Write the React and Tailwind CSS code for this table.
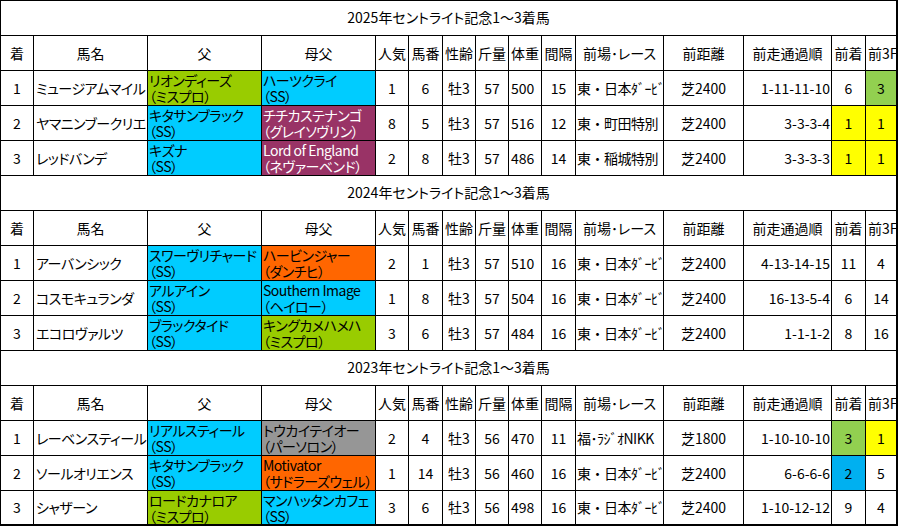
import React from 'react';

const COLORS = {
  g: 'bg-[#99cc00]',
  c: 'bg-[#00ccff]',
  m: 'bg-[#993366] text-white',
  o: 'bg-[#ff6600]',
  s: 'bg-[#969696]',
  y: 'bg-[#ffff00]',
  l: 'bg-[#92d050]',
  b: 'bg-[#00b0f0]',
};

const HEADERS = ['着', '馬名', '父', '母父', '人気', '馬番', '性齢', '斤量', '体重', '間隔', '前場･レース', '前距離', '前走通過順', '前着'];

const SECTIONS = [
  {
    year: 2025,
    rows: [
      ['1', 'ミュージアムマイル', ['リオンディーズ', '（ミスプロ）', 'g'], ['ハーツクライ', '（SS）', 'c'], '1', '6', '牡3', '57', '500', '15', '東・日本ﾀﾞｰﾋﾞ', '芝2400', '1-11-11-10', ['6', ''], ['3', 'l']],
      ['2', 'ヤマニンブークリエ', ['キタサンブラック', '（SS）', 'c'], ['チチカステナンゴ', '（グレイソヴリン）', 'm'], '8', '5', '牡3', '57', '516', '12', '東・町田特別', '芝2400', '3-3-3-4', ['1', 'y'], ['1', 'y']],
      ['3', 'レッドバンデ', ['キズナ', '（SS）', 'c'], ['Lord of England', '（ネヴァーベンド）', 'm'], '2', '8', '牡3', '57', '486', '14', '東・稲城特別', '芝2400', '3-3-3-3', ['1', 'y'], ['1', 'y']],
    ],
  },
  {
    year: 2024,
    rows: [
      ['1', 'アーバンシック', ['スワーヴリチャード', '（SS）', 'c'], ['ハービンジャー', '（ダンチヒ）', 'o'], '2', '1', '牡3', '57', '510', '16', '東・日本ﾀﾞｰﾋﾞ', '芝2400', '4-13-14-15', ['11', ''], ['4', '']],
      ['2', 'コスモキュランダ', ['アルアイン', '（SS）', 'c'], ['Southern Image', '（ヘイロー）', 'c'], '1', '8', '牡3', '57', '504', '16', '東・日本ﾀﾞｰﾋﾞ', '芝2400', '16-13-5-4', ['6', ''], ['14', '']],
      ['3', 'エコロヴァルツ', ['ブラックタイド', '（SS）', 'c'], ['キングカメハメハ', '（ミスプロ）', 'g'], '3', '6', '牡3', '57', '484', '16', '東・日本ﾀﾞｰﾋﾞ', '芝2400', '1-1-1-2', ['8', ''], ['16', '']],
    ],
  },
  {
    year: 2023,
    rows: [
      ['1', 'レーベンスティール', ['リアルスティール', '（SS）', 'c'], ['トウカイテイオー', '（パーソロン）', 's'], '2', '4', '牡3', '56', '470', '11', '福･ﾗｼﾞｵNIKK', '芝1800', '1-10-10-10', ['3', 'l'], ['1', 'y']],
      ['2', 'ソールオリエンス', ['キタサンブラック', '（SS）', 'c'], ['Motivator', '（サドラーズウェル）', 'o'], '1', '14', '牡3', '56', '460', '16', '東・日本ﾀﾞｰﾋﾞ', '芝2400', '6-6-6-6', ['2', 'b'], ['5', '']],
      ['3', 'シャザーン', ['ロードカナロア', '（ミスプロ）', 'g'], ['マンハッタンカフェ', '（SS）', 'c'], '3', '6', '牡3', '56', '498', '16', '東・日本ﾀﾞｰﾋﾞ', '芝2400', '1-10-12-12', ['9', ''], ['4', '']],
    ],
  },
];

const cell = 'bg-white flex items-center overflow-hidden whitespace-nowrap';

function Pedigree({ data }) {
  const [top, bottom, color] = data;
  return (
    <div className={`${COLORS[color]} flex flex-col justify-center overflow-hidden whitespace-nowrap pl-px leading-[16px] tracking-[-0.5px]`}>
      <span>{top}</span>
      <span>{bottom}</span>
    </div>
  );
}

function Mark({ data }) {
  const [value, color] = data;
  const bg = color ? COLORS[color] : 'bg-white';
  return <div className={`${bg} flex items-center justify-center overflow-hidden`}>{value}</div>;
}

function Section({ year, rows }) {
  return (
    <>
      <div className={`${cell} col-span-full justify-center pb-px`}>{year}年セントライト記念1～3着馬</div>
      {HEADERS.map((h) => (
        <div key={h} className={`${cell} justify-center`}>{h}</div>
      ))}
      <div className={`${cell} justify-start pl-[2px]`}>前3F</div>
      {rows.map((r) => (
        <React.Fragment key={r[1]}>
          <div className={`${cell} justify-center`}>{r[0]}</div>
          <div className={`${cell} pl-[2px] tracking-[-0.5px]`}>{r[1]}</div>
          <Pedigree data={r[2]} />
          <Pedigree data={r[3]} />
          <div className={`${cell} justify-center`}>{r[4]}</div>
          <div className={`${cell} justify-center`}>{r[5]}</div>
          <div className={`${cell} justify-center`}>{r[6]}</div>
          <div className={`${cell} justify-center`}>{r[7]}</div>
          <div className={`${cell} pl-[2px]`}>{r[8]}</div>
          <div className={`${cell} justify-center`}>{r[9]}</div>
          <div className={`${cell} pl-px tracking-[-0.5px] [font-feature-settings:normal]`}>{r[10]}</div>
          <div className={`${cell} justify-center`}>{r[11]}</div>
          <div className={`${cell} justify-end pr-px`}>{r[12]}</div>
          <Mark data={r[13]} />
          <Mark data={r[14]} />
        </React.Fragment>
      ))}
    </>
  );
}

export default function App() {
  return (
    <div className="w-[898px] h-[526px] bg-white">
      <div
        className="grid w-[898px] bg-black gap-px pt-px pl-px pr-[2px] pb-[2px] text-[14px] text-black font-['Noto_Sans_CJK_JP',sans-serif] [font-feature-settings:'palt'] grid-cols-[32px_113px_113px_113px_32px_33px_32px_32px_32px_33px_87px_79px_87px_33px_30px] grid-rows-[repeat(14,34px)_33px]"
      >
        {SECTIONS.map((s) => (
          <Section key={s.year} year={s.year} rows={s.rows} />
        ))}
      </div>
    </div>
  );
}
